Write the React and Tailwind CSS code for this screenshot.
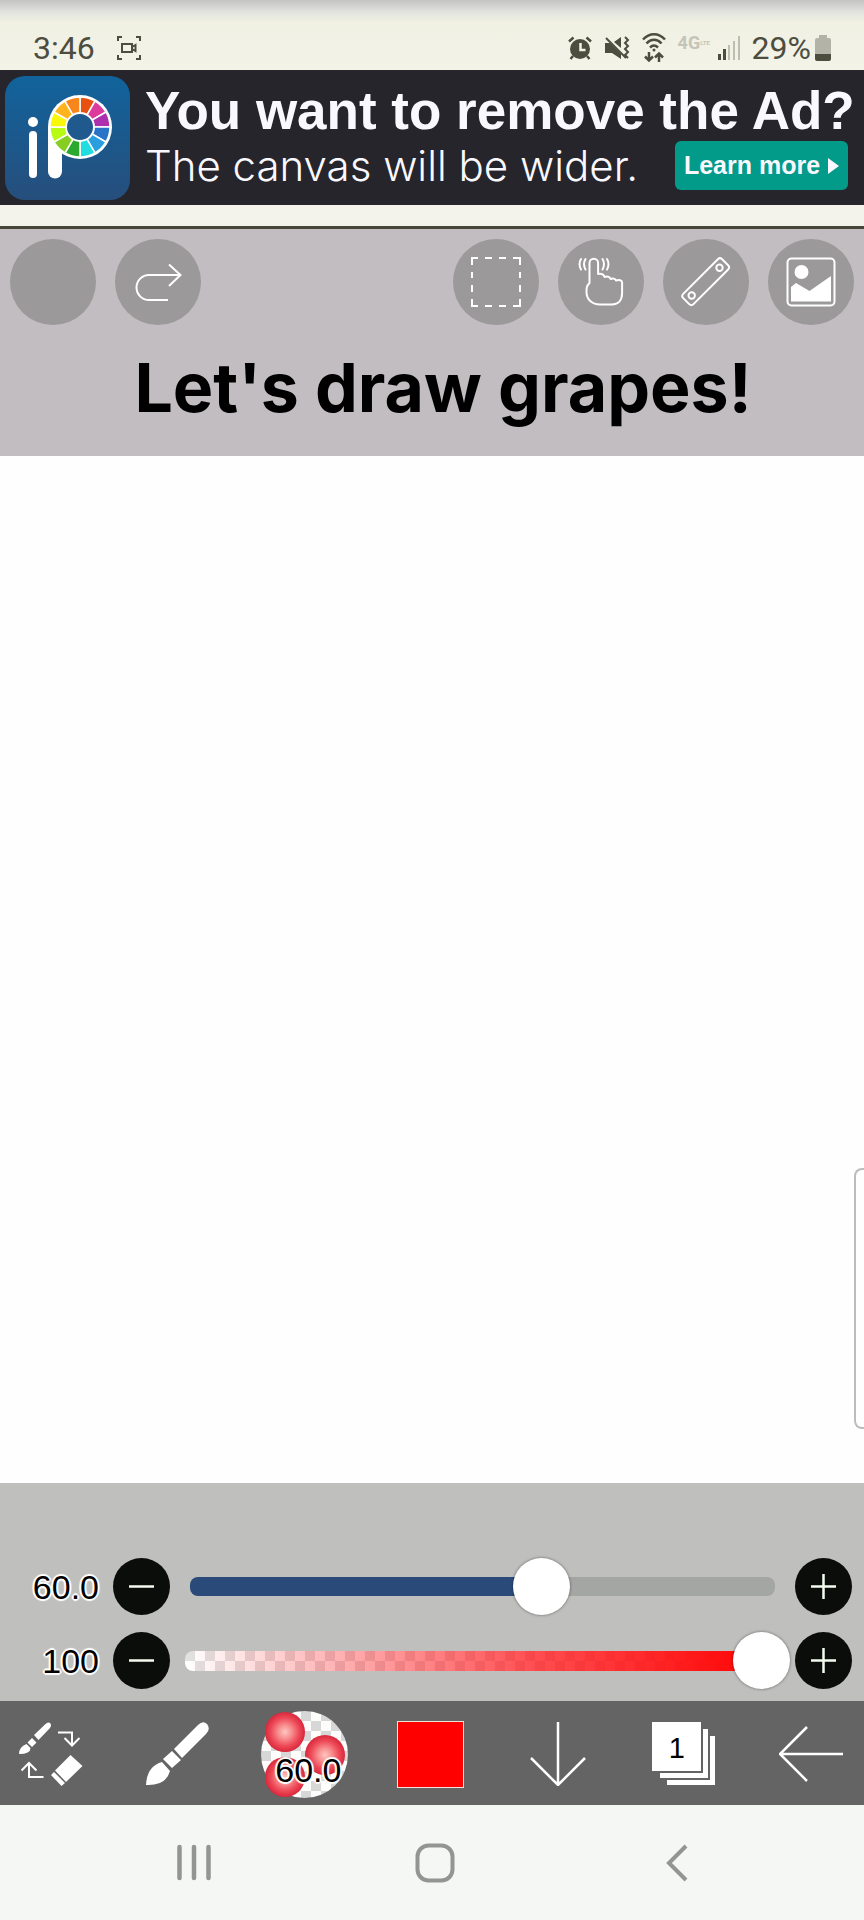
import React from "react";

const wheelColors = [
  "#e8510f",
  "#dc3a9c",
  "#ae2fae",
  "#2a74c8",
  "#2a9fe0",
  "#22dde0",
  "#2ba82e",
  "#86cf22",
  "#b8fb12",
  "#f8f808",
  "#ffb41e",
  "#f9861a",
];

const StatusBar = () => (
  <div className="h-[70px] shrink-0 flex items-center justify-between pt-[26px] pl-[33px] pr-[33px] bg-[linear-gradient(to_bottom,#c3c4c2,#e2e3de_12px,#f0f1e3_22px,#f3f3e8)] text-[#4d4d3f] font-['Roboto',sans-serif] text-[32px] leading-[44px]">
    <div className="flex items-center gap-[22px]">
      <span>3:46</span>
      <svg width="24" height="24" viewBox="0 0 24 24" fill="none" stroke="currentColor" strokeWidth="2">
        <path d="M1 5V1h4M19 1h4v4M23 19v4h-4M5 23H1v-4" />
        <rect x="5" y="8" width="10" height="8" />
        <path d="M15 11l3.500-2v6L15 13" />
      </svg>
    </div>
    <div className="flex items-center gap-3">
      {/* Alarm */}
      <svg width="24" height="24" viewBox="0 0 24 24">
        <circle cx="12" cy="13" r="10" fill="currentColor" />
        <path d="M1 5.500L5.500 1.500M23 5.500L18.500 1.500M5 20l-2.500 3M19 20l2.500 3" stroke="currentColor" strokeWidth="2.500" />
        <path d="M12.500 7v7h5" fill="none" stroke="#f1f2e5" strokeWidth="2.500" />
      </svg>
      {/* Muted, vibrating */}
      <svg width="26" height="24" viewBox="0 0 26 24" fill="currentColor">
        <path d="M1 7h5l11 11v5L8 17H1zM10 6l7-5v11z" />
        <path d="M2 2l20 20" stroke="currentColor" strokeWidth="2" />
        <path d="M21 1l3 3-3 3 3 3-3 3 3 3-3 3 3 3" fill="none" stroke="currentColor" strokeWidth="2" />
      </svg>
      {/* Wi-Fi */}
      <svg width="24" height="30" viewBox="0 0 24 30" fill="none" stroke="currentColor" strokeWidth="2.500">
        <path d="M1 6.500C7.500-.5 16.500-.5 23 6.500M4.500 10.500c4.500-5 10.500-5 15 0M8 14.500c2.500-2.500 5.500-2.500 8 0" />
        <circle cx="12" cy="17" r="1.500" fill="currentColor" stroke="none" />
        <path d="M7 19v8M3 23.500l4 4 4-4M17 29v-8M13 24.500l4-4 4 4" />
      </svg>
      <span className="flex items-center gap-[7px]">
        <span className="h-[30px] w-[33px] flex items-start text-[#c4c4b8] font-bold">
          <span className="text-[18px] leading-[20px]">4G</span>
          <span className="text-[6px] leading-[20px]">LTE</span>
        </span>
        <svg width="22" height="24" viewBox="0 0 22 24">
          <path d="M0 18h3v6H0zM5 13h3v11H5z" fill="currentColor" />
          <path d="M10 9h2v15h-2zM15 5h2v19h-2zM20 0h2v24h-2z" fill="#bdbeb0" />
        </svg>
      </span>
      <span className="flex items-center gap-1">
        <span>29%</span>
        <svg width="16" height="26" viewBox="0 0 16 26">
          <path d="M4 0h8v3h2q2 0 2 2v14H0V5q0-2 2-2h2z" fill="#b3b4a7" />
          <path d="M0 19h16v5q0 2-2 2H2q-2 0-2-2z" fill="currentColor" />
        </svg>
      </span>
    </div>
  </div>
);

const AppLogo = () => (
  <svg width="125" height="124" viewBox="0 0 125 124" className="shrink-0">
    <defs>
      <linearGradient id="logoBg" x1="0" y1="0" x2="0" y2="1">
        <stop offset="0" stopColor="#11639c" />
        <stop offset="1" stopColor="#264e7c" />
      </linearGradient>
    </defs>
    <rect width="125" height="124" rx="20" fill="url(#logoBg)" />
    <circle cx="28" cy="46" r="5" fill="#fff" />
    <rect x="24" y="55" width="8" height="47" rx="4" fill="#fff" />
    <path d="M43 51h14v44.500a6.500 6.500 0 0 1-14 0z" fill="#fff" />
    <circle cx="75" cy="51" r="32" fill="#fff" />
    {wheelColors.map((color, i) => (
      <path
        key={color}
        d="M75 51V21A30 30 0 0 1 90 25.020z"
        fill={color}
        stroke="#fff"
        strokeWidth="1.500"
        transform={`rotate(${i * 30} 75 51)`}
      />
    ))}
    <circle cx="75" cy="51" r="14" fill="#20598e" stroke="#fff" strokeWidth="2" />
  </svg>
);

const AdBanner = () => (
  <div className="h-[135px] shrink-0 flex items-center gap-[15px] pl-[5px] pr-4 bg-[#25252b] text-[#faf8ff] font-['Liberation_Sans',Arial,sans-serif]">
    <AppLogo />
    <div className="flex-1 min-w-0 pb-1 whitespace-nowrap">
      <div className="text-[53px] leading-[60px] font-bold">You want to remove the Ad?</div>
      <div className="flex items-center justify-between">
        <span className="font-['Inter',sans-serif] font-light text-[42px] leading-[49px]">The canvas will be wider.</span>
        <button className="h-[49px] w-[173px] flex items-center justify-center gap-2 rounded-md bg-[#029a89] text-[25px] font-bold">
          Learn more
          <svg width="11" height="16" viewBox="0 0 11 16" fill="currentColor">
            <path d="M0 0l11 8-11 8z" />
          </svg>
        </button>
      </div>
    </div>
  </div>
);

const RoundButton = ({ label, children }) => (
  <button aria-label={label} className="size-[86px] flex items-center justify-center rounded-full bg-[#9b999a]">
    {children}
  </button>
);

const TopTools = () => (
  <div className="flex justify-between px-[10px] pt-[10px]">
    <div className="flex gap-[19px]">
      <RoundButton label="Undo" />
      <RoundButton label="Redo">
        <svg width="48" height="48" viewBox="0 0 48 48" fill="none" stroke="#fff" strokeWidth="2">
          <path d="M34 42H15a12.500 12.500 0 0 1 0-25h31M35 6.500L46.500 17 35 28" />
        </svg>
      </RoundButton>
    </div>
    <div className="flex gap-[19px]">
      <RoundButton label="Selection">
        <svg width="50" height="50" viewBox="0 0 50 50" fill="none" stroke="#fff" strokeWidth="2">
          <path d="M1 8V1h6M14 1h7M28 1h7M42 1h7v7M49 15v6M49 28v7M49 42v7h-7M35 49h-7M21 49h-7M7 49H1v-7M1 35v-7M1 21v-6" />
        </svg>
      </RoundButton>
      <RoundButton label="Touch">
        <svg width="50" height="50" viewBox="0 0 50 50" fill="none" stroke="#fff" strokeWidth="2" strokeLinecap="round" strokeLinejoin="round">
          <path d="M13.500 26V6a4.300 4.300 0 0 1 8.600 0v11c3-.5 5.500 0 6.500 3 2.500-1 5-.5 6 2 2-1 4.500-.5 5.500 1.500 3-1 6-.5 6 2V36c0 7-3.500 11.500-10 11.500H24c-8 0-13.500-5-13.500-12.500 0-4 0-6 3-9z" />
          <path d="M5 2q-3 5 0 10.500M9.500 2q-3 5 0 10.500M26.500 2q3 5 0 10.500M31 2q3 5 0 10.500" />
        </svg>
      </RoundButton>
      <RoundButton label="Ruler">
        <svg width="50" height="50" viewBox="0 0 50 50" fill="none" stroke="#fff" strokeWidth="2">
          <rect x="-3" y="17.500" width="55" height="14.500" rx="3" transform="rotate(-45 24.500 24.500)" />
          <circle cx="38.500" cy="10.700" r="3.200" />
          <circle cx="10.700" cy="38.500" r="3.200" />
        </svg>
      </RoundButton>
      <RoundButton label="Material">
        <svg width="50" height="50" viewBox="0 0 50 50" fill="#fff">
          <rect x="1.500" y="1.500" width="47" height="47" rx="4" fill="none" stroke="#fff" strokeWidth="2" />
          <circle cx="15.500" cy="15" r="7" />
          <path d="M5 30l5-4 13.500 8L45 19v25.500H5z" />
        </svg>
      </RoundButton>
    </div>
  </div>
);

const sign = {
  minus: "M0 12.500h25",
  plus: "M0 12.500h25M12.500 0v25",
};

const StepButton = ({ kind, label }) => (
  <button aria-label={label} className="size-[57px] shrink-0 flex items-center justify-center rounded-full bg-[#0b0d0b]">
    <svg width="25" height="25" viewBox="0 0 25 25" stroke="#f4fbef" strokeWidth="2.500">
      <path d={sign[kind]} />
    </svg>
  </button>
);

const haloText =
  "font-['Liberation_Sans',Arial,sans-serif] text-[34px] leading-[36px] text-black [text-shadow:2px_0_1px_#fff,-2px_0_1px_#fff,0_2px_1px_#fff,0_-2px_1px_#fff,1px_1px_1px_#fff,-1px_-1px_1px_#fff,1px_-1px_1px_#fff,-1px_1px_1px_#fff]";

const SliderRow = ({ id, name, text, value, track }) => (
  <div className="flex items-center pr-3">
    <label htmlFor={id} className={`w-[113px] pr-[14px] text-right ${haloText}`}>
      {text}
    </label>
    <StepButton kind="minus" label={`Decrease ${name}`} />
    <div className="flex-1 grid items-center">
      {track}
      <input
        id={id}
        type="range"
        min="0"
        max="100"
        defaultValue={value}
        aria-label={name}
        className="col-start-1 row-start-1 h-[57px] mr-[5px] appearance-none bg-transparent [&::-webkit-slider-thumb]:appearance-none [&::-webkit-slider-thumb]:size-[57px] [&::-webkit-slider-thumb]:rounded-full [&::-webkit-slider-thumb]:bg-white [&::-webkit-slider-thumb]:shadow-[0_0_3px_rgba(0,0,0,0.5)]"
      />
    </div>
    <StepButton kind="plus" label={`Increase ${name}`} />
  </div>
);

const BrushPreview = () => (
  <svg width="87" height="87" viewBox="0 0 87 87" className="col-start-1 row-start-1">
    <defs>
      <pattern id="checks" width="20" height="20" patternUnits="userSpaceOnUse">
        <rect width="20" height="20" fill="#fdfdfb" />
        <path d="M0 0h10v10H0zM10 10h10v10H10z" fill="#d6d7d6" />
      </pattern>
      <radialGradient id="ball">
        <stop offset="0" stopColor="#ffc6c0" />
        <stop offset=".35" stopColor="#f78d8e" />
        <stop offset=".7" stopColor="#ee4a58" />
        <stop offset="1" stopColor="#d8283c" />
      </radialGradient>
      <clipPath id="round">
        <circle cx="43.500" cy="43.500" r="43.500" />
      </clipPath>
    </defs>
    <g clipPath="url(#round)">
      <rect width="87" height="87" fill="url(#checks)" />
      <circle cx="64" cy="44" r="20" fill="url(#ball)" />
    </g>
    <circle cx="24" cy="21" r="20" fill="url(#ball)" />
    <circle cx="24" cy="66" r="20" fill="url(#ball)" />
  </svg>
);

const ToolBar = () => (
  <div className="h-[104px] shrink-0 flex items-center justify-between pt-[2px] pl-[7px] pr-[9px] bg-[#636463] [&>button]:w-[88px] [&>button]:h-[88px] [&>button]:flex [&>button]:items-center [&>button]:justify-center">
    <button aria-label="Switch brush and eraser">
      <svg width="64" height="64" viewBox="0 0 64 64" fill="#fff">
        <path d="M15 13L26 2.500q3-3 5-1.500 2 2 0 5L19.500 18zM13 16l4.500 4.500-4.500 4.500L8.500 20.500zM7.500 22l4 4q0 6-11.500 6 0-7 7.500-10z" />
        <path d="M51.500 33L63.500 44 47 60 36 48.500zM35 50l11 11-3.500 3L32 53z" />
        <path d="M39 10.500h14v13M45.500 16l7.500 7.500L60.500 16M24.500 55H10V41.500M2.500 48.500L10 41l7.500 7.500" fill="none" stroke="#fff" strokeWidth="2" />
      </svg>
    </button>
    <button aria-label="Brush">
      <svg width="64" height="64" viewBox="0 0 64 64" fill="#fff">
        <path d="M28 27L52 3q5-5 9-1 4 5-1 10L36 36zM26 29l9 9-9 8-9-9zM16 40l8 9q-4 15-24 14 1-19 16-23z" />
      </svg>
    </button>
    <button aria-label="Brush size">
      <span className="grid justify-items-center items-end">
        <BrushPreview />
        <span className={`col-start-1 row-start-1 pb-[10px] pl-2 ${haloText}`}>60.0</span>
      </span>
    </button>
    <button aria-label="Color">
      <span className="size-[67px] border border-[#f3e2d8] bg-[#ff0000]" />
    </button>
    <button aria-label="Hide tools">
      <svg width="64" height="64" viewBox="0 0 64 64" fill="none" stroke="#fff" strokeWidth="2.500">
        <path d="M32 0v62M5 36l27 27 27-27" />
      </svg>
    </button>
    <button aria-label="Layers">
      <span className="grid">
        <svg width="64" height="64" viewBox="0 0 64 64" fill="#fff" className="col-start-1 row-start-1">
          <path d="M0 0h49v49H0zM51 7h5v49H8v-5h43zM58 14h5v49H15v-5h43z" />
        </svg>
        <span className="col-start-1 row-start-1 size-[49px] text-center font-['Liberation_Sans',Arial,sans-serif] text-[29px] leading-[52px] text-black">1</span>
      </span>
    </button>
    <button aria-label="Back">
      <svg width="64" height="64" viewBox="0 0 64 64" fill="none" stroke="#fff" strokeWidth="2.500">
        <path d="M64 32H2M28 5L1 32l27 27" />
      </svg>
    </button>
  </div>
);

const SystemNav = () => (
  <nav className="h-[115px] shrink-0 grid grid-cols-3 pl-[73px] pr-[67px] bg-[#f5f7f5] text-[#939593] [&>button]:flex [&>button]:items-center [&>button]:justify-center">
    <button aria-label="Recent apps">
      <svg width="36" height="38" viewBox="0 0 36 38" stroke="currentColor" strokeWidth="4.500" strokeLinecap="round">
        <path d="M3.500 3v31M18 3v31M32.500 3v31" />
      </svg>
    </button>
    <button aria-label="Home">
      <svg width="40" height="40" viewBox="0 0 40 40" fill="none" stroke="currentColor" strokeWidth="4">
        <rect x="2.500" y="2.500" width="35" height="35" rx="11" />
      </svg>
    </button>
    <button aria-label="Go back">
      <svg width="24" height="38" viewBox="0 0 24 38" fill="none" stroke="currentColor" strokeWidth="4">
        <path d="M22 2L5 19l17 17" />
      </svg>
    </button>
  </nav>
);

const App = () => {
  return (
    <div className="min-h-screen flex flex-col bg-[#fdfefd]">
      <StatusBar />
      <AdBanner />
      <div className="h-[24px] shrink-0 bg-[#f4f3eb] border-b-3 border-[#45453a]" />

      <header className="h-[227px] shrink-0 bg-[#c2bdc0]">
        <TopTools />
        <h1 className="pt-[14px] pl-[22px] text-center whitespace-nowrap font-['Inter',sans-serif] font-bold text-[68px] leading-[96px] text-black">
          Let's draw grapes!
        </h1>
      </header>

      {/* Canvas with the edge panel handle */}
      <main className="flex-1 relative">
        <div className="absolute right-0 bottom-[54px] w-[10px] h-[261px] rounded-l-lg border-2 border-r-0 border-[#bbbcbb]" />
      </main>

      <section className="h-[218px] shrink-0 flex flex-col gap-[17px] pt-[75px] bg-[#bfc0be]">
        <SliderRow
          id="brush-size"
          name="brush size"
          text="60.0"
          value={61}
          track={
            <div className="col-start-1 row-start-1 h-[19px] mx-5 rounded-lg bg-[linear-gradient(to_right,#2a4b79_60%,#a4a6a4_60%)]" />
          }
        />
        <SliderRow
          id="opacity"
          name="opacity"
          text="100"
          value={100}
          track={
            <div className="col-start-1 row-start-1 h-[20px] ml-[15px] mr-8 rounded-l-lg bg-[linear-gradient(to_right,rgba(255,0,0,0),rgba(255,20,24,0.75)_60%,#ff0a0a_96%),repeating-conic-gradient(#fff_0_25%,#e2e2e2_0_50%)] bg-[length:100%_100%,20px_20px]" />
          }
        />
      </section>

      <ToolBar />
      <SystemNav />
    </div>
  );
};

export default App;
